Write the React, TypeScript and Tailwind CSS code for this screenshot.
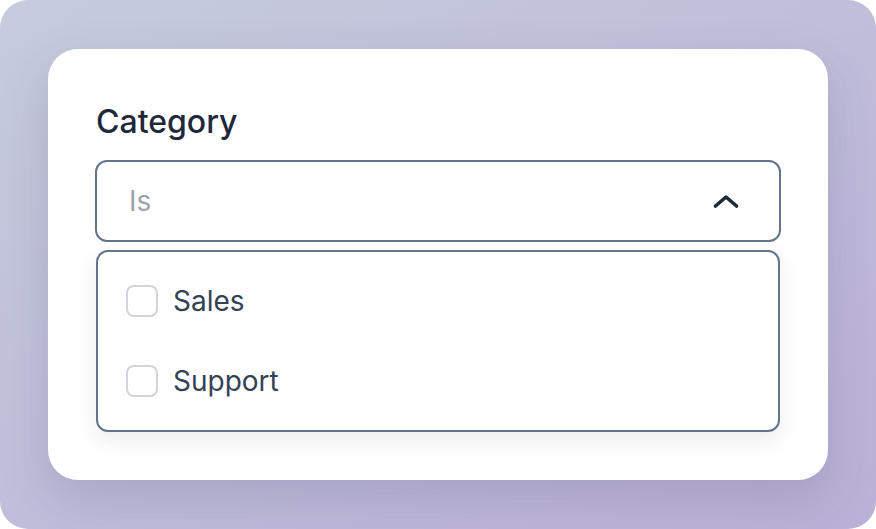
import React from "react";

function ChevronUp() {
  return (
    <svg width="26" height="16" viewBox="0 0 26 16" fill="none" stroke="#1e293b" strokeWidth="3.6" strokeLinecap="round" strokeLinejoin="round">
      <path d="M2.5 13 13 4l10.5 9" />
    </svg>
  );
}

function Option({ label }: { label: string }) {
  return (
    <div className="flex h-[80px] items-center gap-[15px] px-[28px]">
      <span className="h-[32px] w-[32px] shrink-0 rounded-[8px] border-[2.5px] border-[#d1d5db] bg-white" />
      <span className="text-[28px] leading-[40px] text-[#334155]">{label}</span>
    </div>
  );
}

export default function App() {
  return (
    <div className="h-[529px] w-[876px] bg-white" style={{ fontFamily: "Inter, 'Noto Sans', sans-serif" }}>
      <div className="flex h-full w-full items-start rounded-[28px] bg-gradient-to-br from-[#c5ccdd] to-[#bbb0d7] pl-[48px] pt-[49px]">
        <div className="flex h-[431px] w-[780px] flex-col rounded-[30px] bg-white px-[48px] pt-[101px] shadow-[0_20px_50px_rgba(60,60,100,0.18)]">
          <div className="-mt-[48px] mb-[18px] text-[32px] font-medium leading-[40px] text-[#1e293b]">Category</div>
          <div className="-mx-px flex h-[82px] items-center justify-between rounded-[12px] border-2 border-[#64748b] pl-[32px] pr-[40px]">
            <span className="text-[28px] text-[#9ca3af]">Is</span>
            <ChevronUp />
          </div>
          <div className="mt-[8px] rounded-[12px] border-2 border-[#64748b] bg-white py-[9px] shadow-[0_8px_24px_rgba(0,0,0,0.08)]">
            <Option label="Sales" />
            <Option label="Support" />
          </div>
        </div>
      </div>
    </div>
  );
}
